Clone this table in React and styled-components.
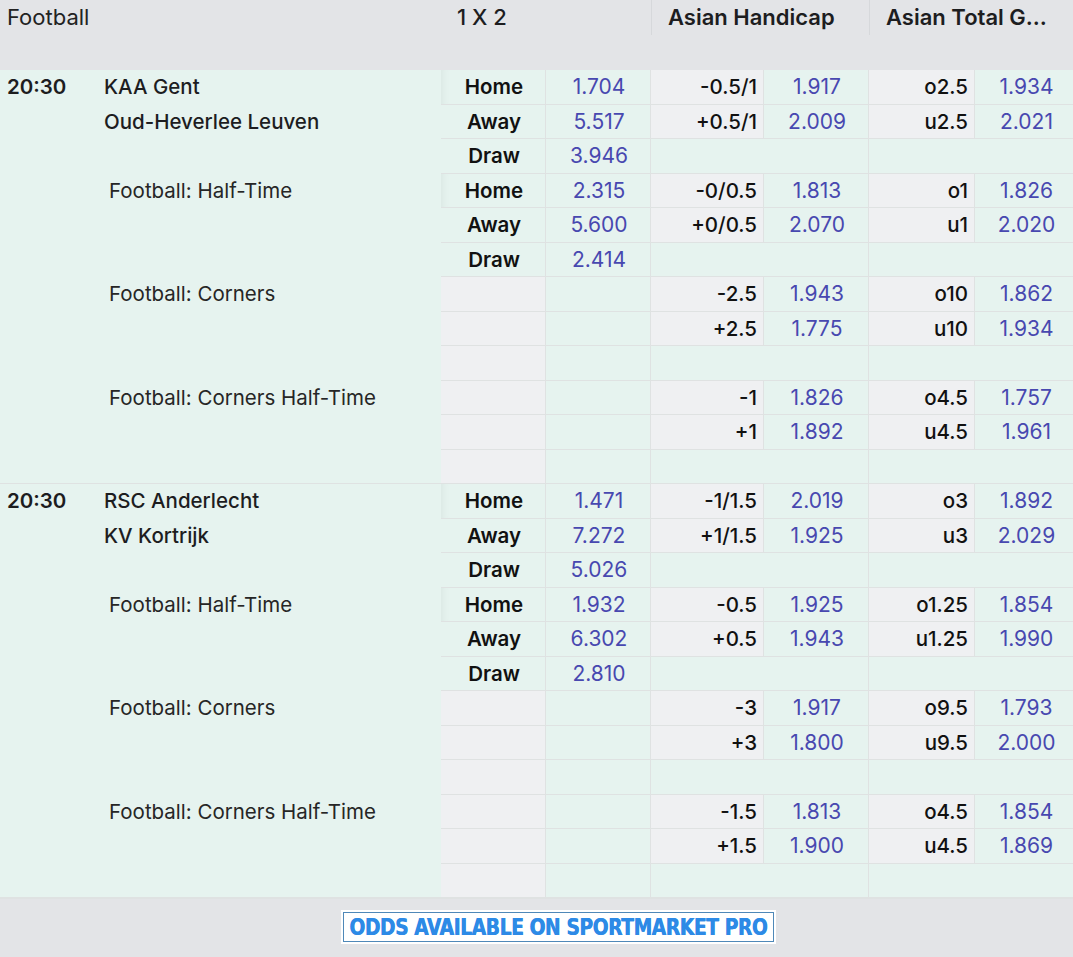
import React from 'react'
import styled, { createGlobalStyle } from 'styled-components'

const GlobalStyle = createGlobalStyle`
  body{
    margin: 0;
    background: #e3e4e7;
    font-family: Inter, "Noto Sans", sans-serif;
    color: #1d1d1f;
  }
`;

const COLS = '100px 341px 105px 105px 113px 105px 106px 1fr';
const LINE = '#dfe2e2';

const events = [
  {
    time: '20:30', home: 'KAA Gent', away: 'Oud-Heverlee Leuven',
    groups: [
      { x12: ['1.704', '5.517', '3.946'], ah: [['-0.5/1', '1.917'], ['+0.5/1', '2.009']], tot: [['o2.5', '1.934'], ['u2.5', '2.021']] },
      { label: 'Football: Half-Time', x12: ['2.315', '5.600', '2.414'], ah: [['-0/0.5', '1.813'], ['+0/0.5', '2.070']], tot: [['o1', '1.826'], ['u1', '2.020']] },
      { label: 'Football: Corners', ah: [['-2.5', '1.943'], ['+2.5', '1.775']], tot: [['o10', '1.862'], ['u10', '1.934']] },
      { label: 'Football: Corners Half-Time', ah: [['-1', '1.826'], ['+1', '1.892']], tot: [['o4.5', '1.757'], ['u4.5', '1.961']] },
    ],
  },
  {
    time: '20:30', home: 'RSC Anderlecht', away: 'KV Kortrijk',
    groups: [
      { x12: ['1.471', '7.272', '5.026'], ah: [['-1/1.5', '2.019'], ['+1/1.5', '1.925']], tot: [['o3', '1.892'], ['u3', '2.029']] },
      { label: 'Football: Half-Time', x12: ['1.932', '6.302', '2.810'], ah: [['-0.5', '1.925'], ['+0.5', '1.943']], tot: [['o1.25', '1.854'], ['u1.25', '1.990']] },
      { label: 'Football: Corners', ah: [['-3', '1.917'], ['+3', '1.800']], tot: [['o9.5', '1.793'], ['u9.5', '2.000']] },
      { label: 'Football: Corners Half-Time', ah: [['-1.5', '1.813'], ['+1.5', '1.900']], tot: [['o4.5', '1.854'], ['u4.5', '1.869']] },
    ],
  },
];

const outcomes = ['Home', 'Away', 'Draw'];

export default function App() {
  return (
    <Page>
      <GlobalStyle />
      <Header>
        <HeadTitle>Football</HeadTitle>
        <HeadMarket $from={3} $to={5}>1 X 2</HeadMarket>
        <HeadMarket $from={5} $to={7} $divider $strong>Asian Handicap</HeadMarket>
        <HeadMarket $from={7} $to={9} $divider $strong>Asian Total Goals</HeadMarket>
      </Header>
      <Body>
        {events.map((ev, ei) => (
          <Event key={ei}>
            {ev.groups.map((g, gi) => {
              const last = gi === ev.groups.length - 1;
              return (
                <Group key={gi}>
                  {g.label ? (
                    <GroupLabel $last={last}>{g.label}</GroupLabel>
                  ) : (
                    <>
                      <Time>{ev.time}</Time>
                      <Teams>
                        <Team>{ev.home}</Team>
                        <Team>{ev.away}</Team>
                      </Teams>
                    </>
                  )}
                  {[0, 1, 2].map((r) => (
                    <React.Fragment key={r}>
                      {g.x12 ? (
                        <>
                          <Cell $first={r === 0} $bold>{outcomes[r]}</Cell>
                          <Cell $odds>{g.x12[r]}</Cell>
                        </>
                      ) : (
                        <>
                          <Cell $gray />
                          <Cell />
                        </>
                      )}
                      {r < 2 ? (
                        <>
                          <Cell $gray $line>{g.ah[r][0]}</Cell>
                          <Cell $odds>{g.ah[r][1]}</Cell>
                          <Cell $gray $line>{g.tot[r][0]}</Cell>
                          <Cell $odds $end>{g.tot[r][1]}</Cell>
                        </>
                      ) : (
                        <>
                          <Cell $span={2} />
                          <Cell $span={2} $end />
                        </>
                      )}
                    </React.Fragment>
                  ))}
                </Group>
              );
            })}
          </Event>
        ))}
      </Body>
      <Footer>
        <Banner>
          <BannerInner>
            <BannerText>ODDS AVAILABLE ON SPORTMARKET PRO</BannerText>
          </BannerInner>
        </Banner>
      </Footer>
    </Page>
  )
}

const Page = styled.div`
  width: 1073px;
  min-height: 957px;
  display: flex;
  flex-direction: column;
  background: #e3e4e7;
`;

const Header = styled.div`
  display: grid;
  grid-template-columns: ${COLS};
  grid-template-rows: 35px 35px;
  font-size: 22px;
`;

const HeadTitle = styled.div`
  grid-column: 1 / 3;
  padding-left: 7px;
  line-height: 35px;
  color: #222;
`;

const HeadMarket = styled.div`
  grid-column: ${(p) => p.$from} / ${(p) => p.$to};
  padding: 0 16px 0 16px;
  line-height: 35px;
  font-weight: ${(p) => (p.$strong ? 600 : 500)};
  white-space: nowrap;
  overflow: hidden;
  text-overflow: ellipsis;
  border-left: ${(p) => (p.$divider ? '1px solid #d6d8db' : 'none')};
`;

const Body = styled.div`
  background: #e6f3ef;
`;

const Event = styled.div`
  display: flex;
  flex-direction: column;
`;

const Group = styled.div`
  display: grid;
  grid-template-columns: ${COLS};
  grid-template-rows: repeat(3, 34.5px);
  font-size: 20.5px;
`;

const Time = styled.div`
  grid-column: 1;
  grid-row: 1 / 4;
  padding-left: 7px;
  line-height: 34px;
  font-weight: 600;
`;

const Teams = styled.div`
  grid-column: 2;
  grid-row: 1 / 4;
  padding-left: 4px;
  display: flex;
  flex-direction: column;
`;

const Team = styled.div`
  height: 34.5px;
  line-height: 34px;
  font-weight: 500;
`;

const GroupLabel = styled.div`
  grid-column: 1 / 3;
  grid-row: 1 / 4;
  padding-left: 109px;
  line-height: 34px;
  color: #262626;
  border-bottom: ${(p) => (p.$last ? `1px solid ${LINE}` : 'none')};
`;

const Cell = styled.div`
  box-sizing: border-box;
  grid-column: ${(p) => (p.$span ? `span ${p.$span}` : 'auto')};
  display: flex;
  align-items: center;
  justify-content: ${(p) => (p.$line ? 'flex-end' : 'center')};
  padding: ${(p) => (p.$line ? '0 6px 0 0' : p.$end ? '0 0 0 5px' : '0 0 0 2px')};
  background: ${(p) => (p.$gray || p.$line ? '#eff0f2' : '#e6f3ef')};
  border-bottom: 1px solid ${LINE};
  border-right: ${(p) => (p.$end ? 'none' : `1px solid ${LINE}`)};
  box-shadow: ${(p) => (p.$first ? 'inset 10px 0 8px -8px rgba(0,0,0,0.05)' : 'none')};
  font-size: ${(p) => (p.$odds ? '21px' : '20.5px')};
  font-weight: ${(p) => (p.$bold ? 600 : p.$line ? 500 : 400)};
  color: ${(p) => (p.$odds ? '#4848b0' : '#111')};
  white-space: nowrap;
`;

const Footer = styled.div`
  display: flex;
  justify-content: center;
  padding: 11px 0 12px 43px;
  border-top: 1px solid ${LINE};
`;

const Banner = styled.div`
  background: #fff;
  padding: 2px;
`;

const BannerInner = styled.div`
  width: 429px;
  height: 28px;
  border: 1px solid #4f88b8;
  display: flex;
  align-items: center;
  justify-content: center;
  overflow: hidden;
`;

const BannerText = styled.span`
  display: inline-block;
  font-family: "DejaVu Sans Condensed", "DejaVu Sans", sans-serif;
  font-weight: 700;
  font-size: 23px;
  color: #2d8ae6;
  letter-spacing: -0.4px;
  transform: scaleX(0.9);
  text-shadow: 0.6px 0 0 #2d8ae6;
  white-space: nowrap;
`;
